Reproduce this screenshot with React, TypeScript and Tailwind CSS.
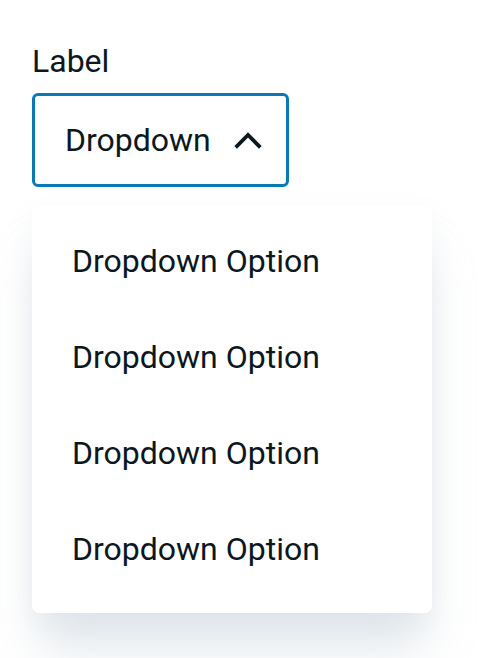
import { useState } from "react";

const options = ["Dropdown Option", "Dropdown Option", "Dropdown Option", "Dropdown Option"];

export default function App() {
  const [open, setOpen] = useState(true);

  return (
    <main className="min-h-screen bg-white pl-8 pt-[41px] font-['Roboto',sans-serif] text-[#0b1820]">
      <label className="block text-[32px] leading-[40px]">Label</label>
      <button
        type="button"
        onClick={() => setOpen((prev) => !prev)}
        className="mt-3 flex h-[94px] w-[257px] items-center rounded-[6px] border-[3px] border-[#0a79b5] pl-[30px] text-[32px] leading-[40px]"
      >
        <span>Dropdown</span>
        <svg width="28" height="18" viewBox="0 0 28 18" className="ml-[23px]" fill="none">
          <polyline points="3,15 14,4 25,15" stroke="#0b1820" strokeWidth="3.8" strokeLinecap="square" />
        </svg>
      </button>
      {open && (
        <ul className="mt-[18px] w-[400px] rounded-[8px] bg-white pb-4 pt-2 shadow-[0_44px_44px_-8px_rgba(185,200,212,0.42),0_8px_24px_rgba(205,214,222,0.22)]">
          {options.map((opt, i) => (
            <li key={i} className="flex h-24 items-center pl-[40px] text-[32px] leading-[40px]">
              {opt}
            </li>
          ))}
        </ul>
      )}
    </main>
  );
}
